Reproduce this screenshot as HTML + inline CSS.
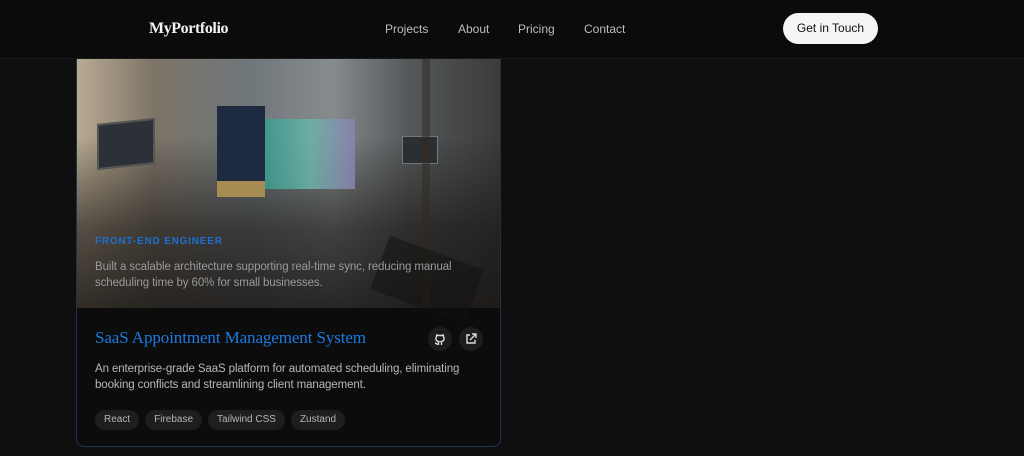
<!DOCTYPE html>
<html><head><style>
*{margin:0;padding:0;box-sizing:border-box}
body{width:1024px;height:456px;background:#0f0f10;font-family:"Liberation Sans",sans-serif;overflow:hidden;position:relative}
.hdr{position:absolute;left:0;top:0;width:1024px;height:59px;background:#0b0b0b;border-bottom:1px solid #1a1a1a;z-index:5}
.logo{position:absolute;left:149px;top:20px;font-family:"Liberation Serif",serif;font-weight:bold;font-size:16px;color:#f2f2f2;letter-spacing:-.4px}
.nav a{position:absolute;top:22px;font-size:12px;color:#bdbdbd;text-decoration:none}
.btn{position:absolute;left:783px;top:13px;width:95px;height:31px;border-radius:16px;background:#f5f5f5;color:#111;font-size:12px;text-align:center;line-height:31px}
.card{position:absolute;left:76px;top:20px;width:425px;height:427px;border:1px solid #1c3250;border-radius:8px;background:#0c0c0d;overflow:hidden}
.img{position:absolute;left:0;top:0;width:425px;height:287px;
background:
linear-gradient(180deg,rgba(0,0,0,0) 40%,rgba(20,18,16,.6) 72%,rgba(25,22,20,.85) 100%),
linear-gradient(90deg,#b9ab92 0%,#7d7468 18%,#6f767a 40%,#868b8d 60%,#55585a 78%,#3a3b39 100%);}
.t{position:absolute;color:#b8b8b8;font-size:11.5px;line-height:16px;letter-spacing:-.1px}
.tag{display:inline-block;height:20px;line-height:20px;padding:0 9px;border-radius:10px;background:#1e1e1f;color:#b5b5b5;font-size:10px;margin-right:6px}
.ic{position:absolute;top:306px;width:24px;height:24px;border-radius:12px;background:#1d1d1e}
</style></head><body>
<div class="card">
 <div class="img">
  <div style="position:absolute;left:20px;top:100px;width:58px;height:46px;background:#2b3136;border:2px solid #555;transform:skewY(-6deg)"></div>
  <div style="position:absolute;left:140px;top:85px;width:48px;height:90px;background:#1d2a40"></div>
  <div style="position:absolute;left:188px;top:98px;width:90px;height:70px;background:linear-gradient(90deg,#3a9c90,#6ab4a8 50%,#8c82b0);opacity:.85"></div>
  <div style="position:absolute;left:140px;top:160px;width:48px;height:16px;background:#a68c50"></div>
  <div style="position:absolute;left:325px;top:115px;width:36px;height:28px;background:#2a2f33;border:1px solid #777"></div>
  <div style="position:absolute;left:345px;top:0;width:8px;height:287px;background:rgba(50,40,30,.5)"></div>
  <div style="position:absolute;left:300px;top:230px;width:100px;height:57px;background:rgba(15,15,15,.5);transform:rotate(20deg)"></div>
 </div>
 <div style="position:absolute;left:18px;top:215px;font-size:10px;font-weight:bold;color:#1f6fd0;letter-spacing:.8px">FRONT-END ENGINEER</div>
 <div class="t" style="left:18px;top:238px;color:#9a9a9a">Built a scalable architecture supporting real-time sync, reducing manual<br>scheduling time by 60% for small businesses.</div>
 <div style="position:absolute;left:18px;top:307px;font-family:'Liberation Serif',serif;font-size:17px;color:#1d7ae0;letter-spacing:-.1px">SaaS Appointment Management System</div>
 <div class="ic" style="left:351px"><svg width="24" height="24" viewBox="0 0 24 24" fill="none" stroke="#ddd" stroke-width="1.4"><path d="M10 17c-2 .6-2-1-3-1.2M13.5 18v-2c0-.7-.1-1.1-.4-1.4 1.5-.2 3-.7 3-3.2 0-.7-.2-1.3-.7-1.8.1-.5.1-1.1-.1-1.7 0 0-.6-.2-1.8.7a6 6 0 0 0-3 0C9.3 7.7 8.7 7.9 8.7 7.9c-.2.6-.2 1.2-.1 1.7-.5.5-.7 1.1-.7 1.8 0 2.5 1.5 3 3 3.2-.3.3-.4.7-.4 1.4v2"/></svg></div>
 <div class="ic" style="left:382px"><svg width="24" height="24" viewBox="0 0 24 24" fill="none" stroke="#ddd" stroke-width="1.4"><path d="M11 8H8v8h8v-3M13 7h4v4M17 7l-6 6"/></svg></div>
 <div class="t" style="left:18px;top:340px">An enterprise-grade SaaS platform for automated scheduling, eliminating<br>booking conflicts and streamlining client management.</div>
 <div style="position:absolute;left:18px;top:388px;white-space:nowrap"><span class="tag">React</span><span class="tag">Firebase</span><span class="tag">Tailwind CSS</span><span class="tag">Zustand</span></div>
</div>
<div class="hdr">
 <div class="logo">MyPortfolio</div>
 <div class="nav"><a style="left:385px">Projects</a><a style="left:458px">About</a><a style="left:518px">Pricing</a><a style="left:584px">Contact</a></div>
 <div class="btn">Get in Touch</div>
</div>
</body></html>
